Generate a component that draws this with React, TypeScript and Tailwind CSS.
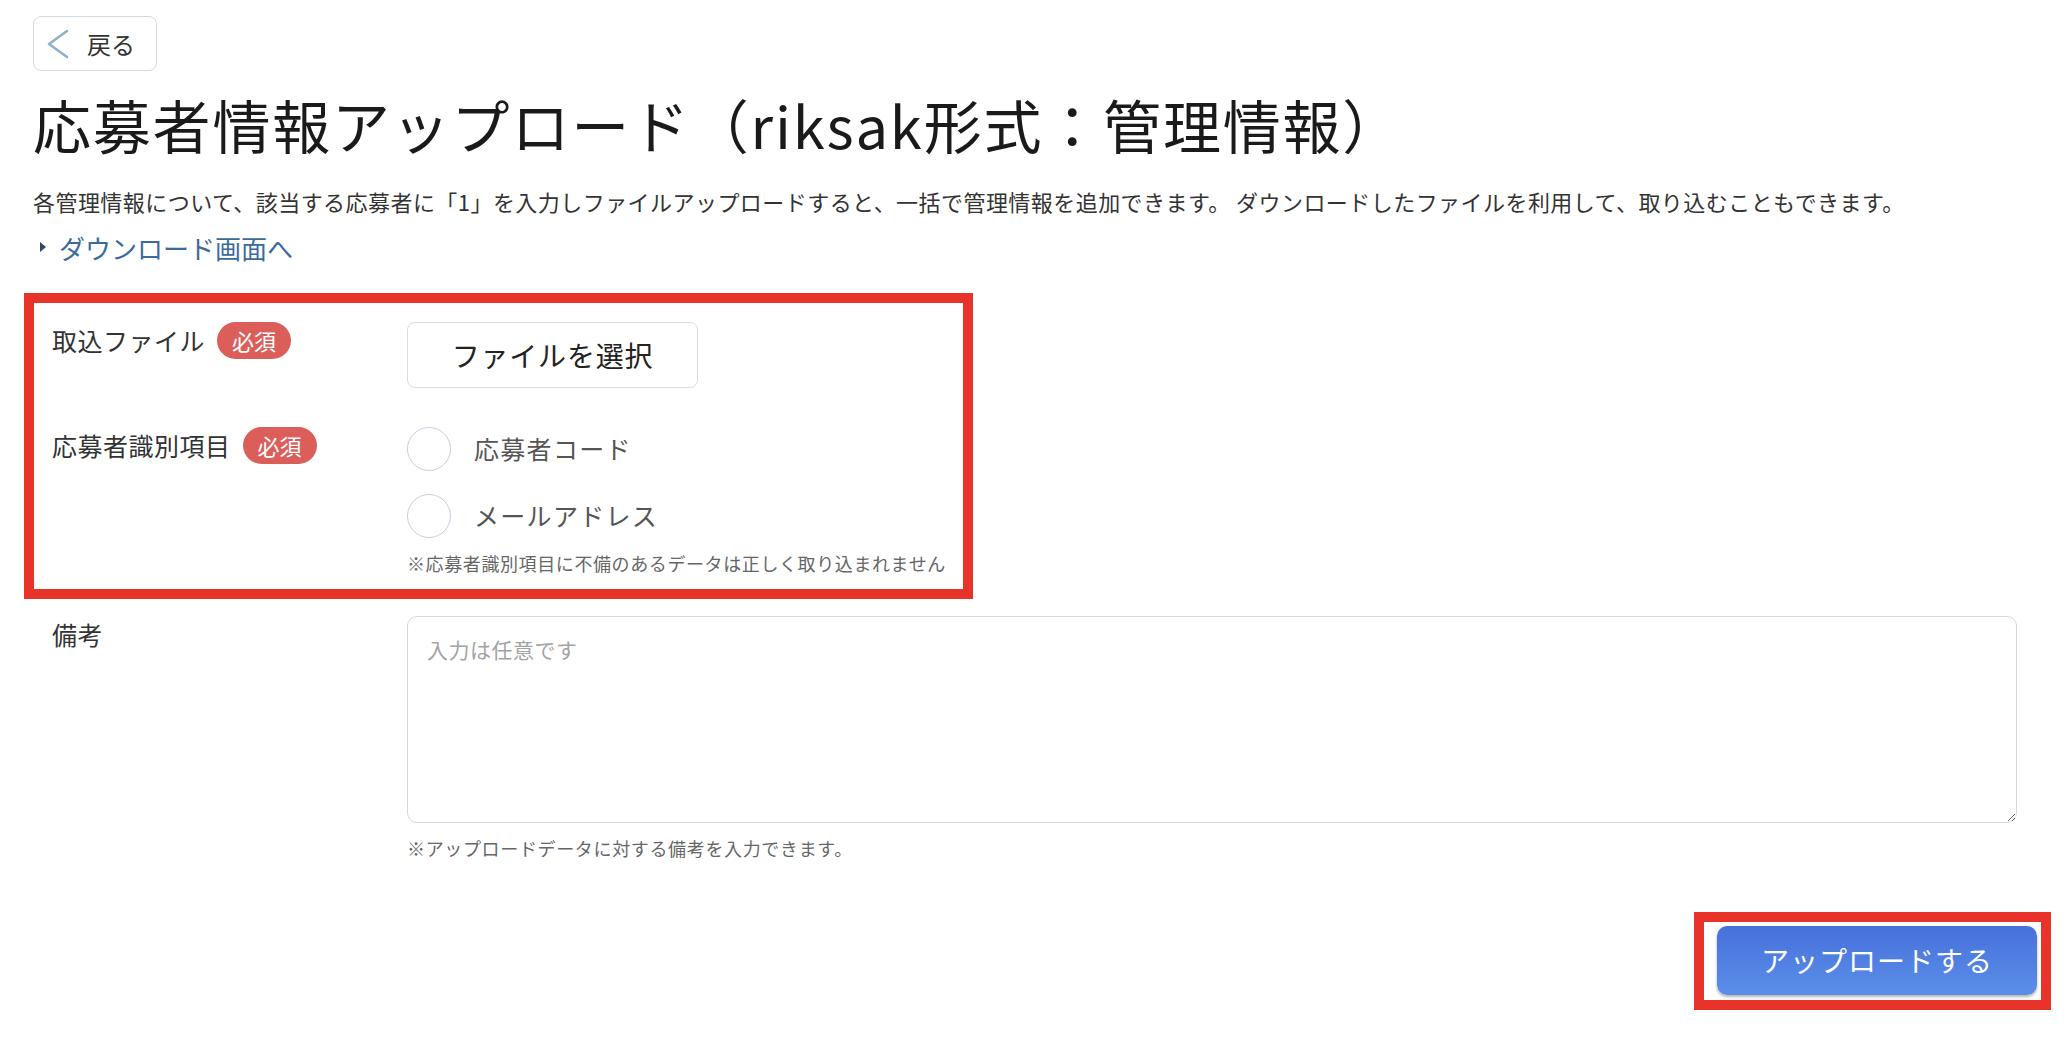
import { useState } from "react";

const FONT = { fontFamily: '"Noto Sans CJK JP", "Noto Sans", sans-serif' };

function RequiredBadge() {
  return (
    <span className="inline-flex h-[37px] items-center rounded-full bg-[#dc5e5a] px-[15px] text-[22px] leading-none text-white">
      必須
    </span>
  );
}

function Radio({ label, checked, onClick }: { label: string; checked: boolean; onClick: () => void }) {
  return (
    <button type="button" onClick={onClick} className="flex h-[44px] items-center gap-[23px] text-left">
      <span className="flex h-[44px] w-[44px] items-center justify-center rounded-full border-[1.5px] border-[#c3d2de] bg-white">
        {checked && <span className="h-[20px] w-[20px] rounded-full bg-[#4a74dc]" />}
      </span>
      <span className="text-[25px] leading-none tracking-[1.3px] text-[#555]">{label}</span>
    </button>
  );
}

export default function App() {
  const [idType, setIdType] = useState<string | null>(null);

  return (
    <div className="min-h-screen bg-white text-[#333]" style={FONT}>
      <div className="flex flex-col pl-[33px] pr-[17px] pt-[16px] pb-[28px]">
        {/* Back */}
        <button
          type="button"
          className="flex h-[55px] w-[124px] items-center rounded-[8px] border border-[#d6dadf] bg-white pl-[12px]"
        >
          <svg width="24" height="30" viewBox="0 0 24 30" fill="none">
            <path d="M21 2 L3 15 L21 28" stroke="#8fb0c9" strokeWidth="2.6" strokeLinecap="round" strokeLinejoin="round" />
          </svg>
          <span className="ml-[17px] text-[24px] leading-none text-[#333]">戻る</span>
        </button>

        <h1 className="mt-[19px] text-[58px] font-normal leading-[1.2] tracking-[1.8px] text-[#1a1a1a]">
          応募者情報アップロード（riksak形式：管理情報）
        </h1>

        <p className="mt-[25px] text-[22px] leading-[1.5] tracking-[0.45px] text-[#333]">
          各管理情報について、該当する応募者に「1」を入力しファイルアップロードすると、一括で管理情報を追加できます。 ダウンロードしたファイルを利用して、取り込むこともできます。
        </p>

        <a href="#" className="ml-[7px] mt-[10px] flex items-center text-[26px] leading-[1.5] text-[#3a6b9c]">
          <svg width="6" height="10" viewBox="0 0 6 10" className="mr-[13px]">
            <polygon points="0,0 6,5 0,10" fill="#34495e" />
          </svg>
          ダウンロード画面へ
        </a>

        {/* Required fields (highlighted) */}
        <div className="-ml-[9px] mt-[26px] flex w-[949px] flex-col gap-[39px] border-[10px] border-[#e8332a] pb-[12px] pl-[18px] pt-[19px]">
          <div className="flex">
            <div className="flex h-[37px] w-[355px] items-center gap-[12px]">
              <span className="text-[25px] leading-none tracking-[0.5px] text-[#333]">取込ファイル</span>
              <RequiredBadge />
            </div>
            <button
              type="button"
              className="flex h-[66px] w-[291px] items-center justify-center rounded-[8px] border border-[#d9dde2] bg-white text-[28px] leading-none tracking-[0.8px] text-[#222]"
            >
              ファイルを選択
            </button>
          </div>

          <div className="flex">
            <div className="flex h-[37px] w-[355px] items-center gap-[12px]">
              <span className="text-[25px] leading-none tracking-[0.5px] text-[#333]">応募者識別項目</span>
              <RequiredBadge />
            </div>
            <div className="flex flex-col">
              <div className="flex flex-col gap-[23px]">
                <Radio label="応募者コード" checked={idType === "code"} onClick={() => setIdType("code")} />
                <Radio label="メールアドレス" checked={idType === "mail"} onClick={() => setIdType("mail")} />
              </div>
              <p className="mt-[12px] text-[18px] leading-[1.5] tracking-[0.6px] text-[#666]">
                ※応募者識別項目に不備のあるデータは正しく取り込まれません
              </p>
            </div>
          </div>
        </div>

        {/* Note */}
        <div className="mt-[17px] flex pl-[19px]">
          <div className="flex h-[37px] w-[355px] items-center">
            <span className="text-[25px] leading-none tracking-[0.5px] text-[#333]">備考</span>
          </div>
          <div className="flex flex-col">
            <textarea
              placeholder="入力は任意です"
              className="h-[207px] w-[1610px] rounded-[10px] border-[1.5px] border-[#cfd9e2] px-[19px] pt-[17px] text-[21px] leading-[1.5] tracking-[0.5px] text-[#333] outline-none placeholder:text-[#a3a3a3]"
            />
            <p className="mt-[12px] text-[18px] leading-[1.5] tracking-[0.65px] text-[#666]">
              ※アップロードデータに対する備考を入力できます。
            </p>
          </div>
        </div>

        {/* Submit (highlighted) */}
        <div className="ml-auto mt-[50px] border-[10px] border-[#e8332a] pb-[5px] pl-[13px] pr-[4px] pt-[4px]">
          <button
            type="button"
            className="flex h-[69px] w-[320px] items-center justify-center rounded-[10px] bg-gradient-to-b from-[#4770db] to-[#5b8fe9] text-[28px] leading-none tracking-[1px] text-white shadow-[0_2px_3px_rgba(0,0,0,0.3)]"
          >
            アップロードする
          </button>
        </div>
      </div>
    </div>
  );
}
